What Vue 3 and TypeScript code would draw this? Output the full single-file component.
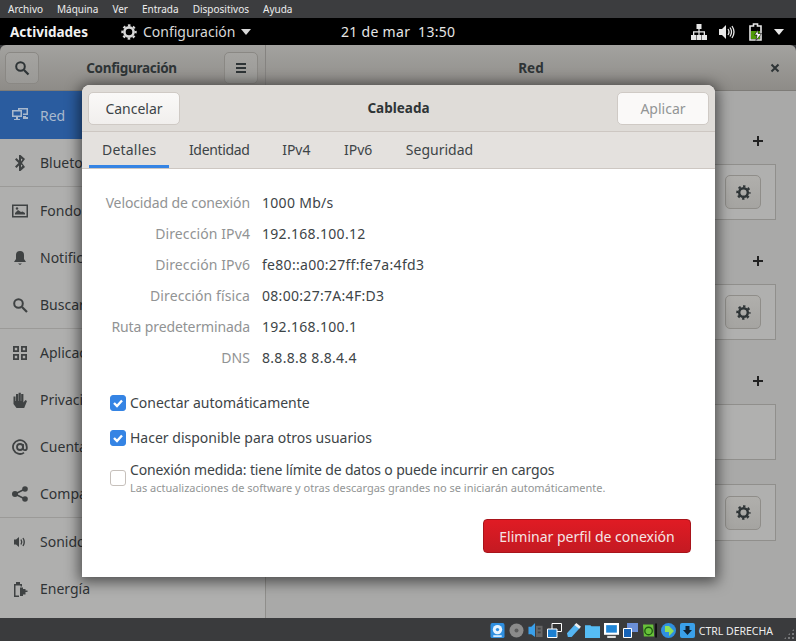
<template>
  <div class="screen">
    <svg class="defs" width="0" height="0">
      <symbol id="gear" viewBox="0 0 16 16">
        <circle cx="8" cy="8" r="4.600" fill="none" stroke="currentColor" stroke-width="2.600" />
        <circle cx="8" cy="8" r="6.700" fill="none" stroke="currentColor" stroke-width="2" stroke-dasharray="2.600 2.662" stroke-dashoffset="1.300" />
      </symbol>
    </svg>

    <div class="menubar">
      <span v-for="m in menus" :key="m">{{ m }}</span>
    </div>

    <div class="topbar">
      <span class="activities">Actividades</span>
      <span class="app-menu">
        <svg class="app-gear" viewBox="0 0 16 16"><use href="#gear" /></svg>
        Configuración
        <i class="caret"></i>
      </span>
      <span class="clock">21 de mar&nbsp;&nbsp;13:50</span>
      <span class="tray">
        <svg width="16" height="16" viewBox="0 0 16 16" fill="#e8e8e8">
          <path d="M5.500 0h5v5H8.600v2.200H14V11h-1.300V8.400H8.600V11H7.400V8.400H3.300V11H2V7.200h5.400V5H5.500z" />
          <path d="M0 11h5v5H0zM5.500 11h5v5h-5zM11 11h5v5h-5z" />
        </svg>
        <svg class="tray-sound" width="16" height="16" viewBox="0 0 16 16" fill="#e8e8e8">
          <path d="M0 5h3l4-4v14l-4-4H0z" />
          <path d="M9 5q2 3 0 6M11 3.500q3 4.500 0 9M13 2q4 6 0 12" fill="none" stroke="#e8e8e8" stroke-width="1.300" />
        </svg>
        <svg width="14" height="18" viewBox="0 0 14 18">
          <path d="M4.500 1h4v2H12v14H1V3h3.500z" fill="none" stroke="#e8e8e8" stroke-width="1.600" />
          <path d="M2 8h9v8H2z" fill="#4e9a06" />
          <path d="M9 7 5.500 12h2.500l-1 5.500 5.500-7H9z" fill="#fff" stroke="#000" stroke-width=".6" />
        </svg>
        <i class="caret tray-caret"></i>
      </span>
    </div>

    <div class="window">
      <div class="titlebar">
        <div class="title-left">
          <button class="head-btn" type="button">
            <svg width="16" height="16" viewBox="0 0 16 16"><circle cx="6.500" cy="6.500" r="4.300" fill="none" stroke="#2e3436" stroke-width="2" /><path d="m10 10 4.500 4.500" stroke="#2e3436" stroke-width="2.200" /></svg>
          </button>
          <span class="title-text">Configuración</span>
          <button class="head-btn" type="button">
            <svg width="16" height="16" viewBox="0 0 16 16" fill="#2e3436"><path d="M3 3h10v2H3zM3 7h10v2H3zM3 11h10v2H3z" /></svg>
          </button>
        </div>
        <div class="title-right">
          <span class="title-text">Red</span>
          <svg class="close" width="10" height="10" viewBox="0 0 10 10"><path d="m1.500 1.500 7 7m0-7-7 7" stroke="#2e3436" stroke-width="2" /></svg>
        </div>
      </div>

      <div class="main">
        <nav class="sidebar">
          <div
            v-for="item in sideItems"
            :key="item.label"
            :class="['side-row', { active: item.active, sep: item.sep }]"
          >
            <svg class="side-icon" width="16" height="16" viewBox="0 0 16 16" v-html="item.icon"></svg>
            <span>{{ item.label }}</span>
          </div>
        </nav>

        <section class="content">
          <div v-for="(p, i) in panels" :key="i" :class="['group', p.cls]">
            <div v-if="p.plus" class="plus-row"><span class="plus"></span></div>
            <div class="panel">
              <button v-if="p.gear" class="gear-btn" type="button">
                <svg width="15" height="15" viewBox="0 0 16 16"><use href="#gear" /></svg>
              </button>
            </div>
          </div>
        </section>
      </div>

      <div class="dialog">
        <header class="dlg-head">
          <button class="dlg-btn" type="button">Cancelar</button>
          <span class="dlg-title">Cableada</span>
          <button class="dlg-btn disabled" type="button">Aplicar</button>
        </header>
        <div class="tabs">
          <span v-for="(t, i) in tabs" :key="t" :class="['tab', { on: i === 0 }]">{{ t }}</span>
        </div>
        <div class="dlg-body">
          <dl class="details">
            <template v-for="d in details" :key="d.k">
              <dt>{{ d.k }}</dt>
              <dd>{{ d.v }}</dd>
            </template>
          </dl>

          <label class="check first">
            <span class="box on"><svg width="16" height="16" viewBox="0 0 16 16"><path d="m4 8 3 3 5-5.500" fill="none" stroke="#fff" stroke-width="2.400" /></svg></span>
            <span>Conectar automáticamente</span>
          </label>
          <label class="check second">
            <span class="box on"><svg width="16" height="16" viewBox="0 0 16 16"><path d="m4 8 3 3 5-5.500" fill="none" stroke="#fff" stroke-width="2.400" /></svg></span>
            <span>Hacer disponible para otros usuarios</span>
          </label>
          <label class="check third">
            <span class="box"></span>
            <span class="check-text">
              <span>Conexión medida: tiene límite de datos o puede incurrir en cargos</span>
              <small>Las actualizaciones de software y otras descargas grandes no se iniciarán automáticamente.</small>
            </span>
          </label>

          <div class="dlg-actions">
            <button class="danger" type="button">Eliminar perfil de conexión</button>
          </div>
        </div>
      </div>
    </div>

    <footer class="statusbar">
      <svg class="st" viewBox="0 0 15 16"><rect width="15" height="16" rx="2" fill="#2f8fe0" /><circle cx="7.500" cy="7" r="5" fill="#e8f4ff" /><circle cx="7.500" cy="7" r="1.800" fill="#2f8fe0" /><path d="M3 13h9v2H3z" fill="#cfe8ff" /></svg>
      <svg class="st" viewBox="0 0 15 15"><circle cx="7.500" cy="7.500" r="7" fill="#8b8b8b" /><circle cx="7.500" cy="7.500" r="2" fill="#5c5c5c" /></svg>
      <svg class="st" viewBox="0 0 15 16"><path d="M0 4h3l4-4v15l-4-3H0z" fill="#3aa0ea" /><path d="M8 3h7v12H8z" fill="#666" /><path d="M10 5h3v2h-3zM10 9h3v2h-3z" fill="#444" /></svg>
      <svg class="st" viewBox="0 0 15 15"><path d="M5 .500h9.500v8H5z" fill="#333" stroke="#fff" /><path d="M.500 6H10v8.500H.500z" fill="#1c7fd0" stroke="#fff" /></svg>
      <svg class="st" viewBox="0 0 16 16"><path d="m10 1 5 4-9 10H2l-1-4z" fill="#55b5f2" /><path d="m11 0 5 4-2 2-5-4z" fill="#eee" /></svg>
      <svg class="st" viewBox="0 0 14 14"><path d="M0 2h5l1 1h8v11H0z" fill="#56bdf5" /></svg>
      <svg class="st" viewBox="0 0 14 14"><rect width="14" height="11" fill="#fff" /><rect x="2" y="2" width="10" height="7" fill="#1f86d8" /><path d="M3 12h8v2H3z" fill="#ddd" /></svg>
      <svg class="st" viewBox="0 0 15 15"><path d="M4 0h11v9H4z" fill="#6b8fd8" /><path d="M.500 5.500h8v9h-8z" fill="#1763b8" stroke="#fff" /></svg>
      <svg class="st" viewBox="0 0 16 15"><path d="M1 1h11l1 13H2z" fill="#68c23a" /><circle cx="7" cy="8" r="4" fill="none" stroke="#1e5c10" stroke-width="1.400" /><path d="M14 0h2v15h-2z" fill="#111" /></svg>
      <svg class="st" viewBox="0 0 15 15"><circle cx="7.500" cy="7.500" r="7.500" fill="#2f8fe0" /><path d="M4 3h4l5 5-5 5V9H4z" fill="#8fe05a" /></svg>
      <svg class="st" viewBox="0 0 15 15"><rect width="15" height="15" rx="2" fill="#3aa0ea" /><path d="M5.500 3h4v4H12l-4.500 5L3 7h2.500z" fill="#123" /></svg>
      <span class="st-text">CTRL DERECHA</span>
    </footer>
  </div>
</template>

<script setup lang="ts">
interface SideItem {
  label: string
  icon: string
  active?: boolean
  sep?: boolean
}

const menus = ['Archivo', 'Máquina', 'Ver', 'Entrada', 'Dispositivos', 'Ayuda']
const tabs = ['Detalles', 'Identidad', 'IPv4', 'IPv6', 'Seguridad']

const sideItems: SideItem[] = [
  { label: 'Red', active: true, icon: '<path d="M0 3h10v7H6v2h2v1H2v-1h2v-2H0zM1.500 4.500v4h7v-4z" fill="currentColor" fill-rule="evenodd"/><path d="M6 1h10v7h-5V6.500h3.500v-4H7.500V3H6z" fill="currentColor"/><path d="M11 9h3v1h2v2h-5z" fill="currentColor"/>' },
  { label: 'Bluetooth', sep: true, icon: '<path d="M7 0h1.500L13 4l-3 4 3 4-4.500 4H7v-5.500L4.500 13 3 11.500 6.500 8 3 4.500 4.500 3 7 5.500zM9 3.500v3L10.500 4.500zM9 9.500v3l1.500-2z" fill="currentColor" fill-rule="evenodd"/>' },
  { label: 'Fondo', icon: '<path d="M0 1.500h16v13H0zM1.500 3v10h13V3z" fill="currentColor" fill-rule="evenodd"/><path d="M3 10 6 7l3 2 1.500-.5L13 10v1.500H3z" fill="currentColor"/><circle cx="5" cy="5.500" r="1.200" fill="currentColor"/>' },
  { label: 'Notificaciones', icon: '<path d="M8 1a4 4 0 0 1 4 4v4l2 3H2l2-3V5a4 4 0 0 1 4-4zM6 13.500h4L8 15z" fill="currentColor"/>' },
  { label: 'Buscar', sep: true, icon: '<circle cx="6.500" cy="6.500" r="4.300" fill="none" stroke="currentColor" stroke-width="2"/><path d="m10 10 5 5" stroke="currentColor" stroke-width="2.200"/>' },
  { label: 'Aplicaciones', icon: '<path d="M1 1h6v6H1zM9 1h6v6H9zM1 9h6v6H1zM9 9h6v6H9zM2.800 2.800v2.400h2.400V2.800zM10.800 2.800v2.400h2.400V2.800zM2.800 10.800v2.400h2.400v-2.400zM10.800 10.800v2.400h2.400v-2.400z" fill="currentColor" fill-rule="evenodd"/>' },
  { label: 'Privacidad', icon: '<path d="M1.500 4.500h2V9H4V2h2.200v7h.4V.800h2.200V9h.4V2h2.200v8.500l2-2.500 1.600 1-2.800 7H4.500L1.500 12z" fill="currentColor"/>' },
  { label: 'Cuentas', icon: '<circle cx="8" cy="8" r="3" fill="none" stroke="currentColor" stroke-width="1.800"/><path d="M11 5v4.200a1.900 1.900 0 0 0 3.800 0V8A6.900 6.900 0 1 0 12 13.600" fill="none" stroke="currentColor" stroke-width="1.800"/>' },
  { label: 'Compartir', sep: true, icon: '<circle cx="3" cy="8" r="3" fill="currentColor"/><circle cx="13" cy="3" r="2.800" fill="currentColor"/><circle cx="13" cy="13" r="2.800" fill="currentColor"/><path d="m3 8 10-5M3 8l10 5" stroke="currentColor" stroke-width="1.600"/>' },
  { label: 'Sonido', icon: '<path d="M2 5.500h2L7 3v10l-3-2.500H2z" fill="currentColor"/><path d="M9 5.500q1.500 2.500 0 5M11 4q2.500 4 0 8" fill="none" stroke="currentColor" stroke-width="1.400"/>' },
  { label: 'Energía', icon: '<path d="M2 3h2V1h4v2h2v2.500H8.500v-1h-5v10H7V16H2z" fill="currentColor"/><path d="M8 6.500h3V8h2.500v1.500H15.500V11h-2v2.500H11V15H8z" fill="currentColor"/>' },
]

const panels = [
  { plus: true, gear: true, cls: 'g1' },
  { plus: true, gear: true, cls: 'g2' },
  { plus: true, gear: false, cls: 'g3' },
  { plus: false, gear: true, cls: 'g4' },
]

const details = [
  { k: 'Velocidad de conexión', v: '1000 Mb/s' },
  { k: 'Dirección IPv4', v: '192.168.100.12' },
  { k: 'Dirección IPv6', v: 'fe80::a00:27ff:fe7a:4fd3' },
  { k: 'Dirección física', v: '08:00:27:7A:4F:D3' },
  { k: 'Ruta predeterminada', v: '192.168.100.1' },
  { k: 'DNS', v: '8.8.8.8 8.8.4.4' },
]
</script>

<style>
html,
body {
  margin: 0;
  background: #3a3b3d;
}
</style>

<style scoped>
.defs {
  position: absolute;
}

.screen {
  width: 796px;
  height: 641px;
  display: flex;
  flex-direction: column;
  overflow: hidden;
  font-family: "Noto Sans", "Open Sans", sans-serif;
  font-size: 14px;
  color: #2e3436;
}

.menubar {
  height: 18px;
  flex: none;
  background: #3c3d3f;
  color: #eee;
  display: flex;
  align-items: center;
  gap: 14px;
  padding-left: 8px;
  font-size: 10px;
}

.topbar {
  height: 27px;
  flex: none;
  background: #000;
  color: #e6e6e6;
  display: flex;
  align-items: center;
  position: relative;
  padding-left: 10px;
  font-size: 14px;
}
.activities {
  font-weight: 700;
  color: #f2f2f2;
  font-size: 13.500px;
}
.app-menu {
  margin-left: 33px;
  display: flex;
  align-items: center;
  gap: 6px;
  color: #d8d8d8;
}
.app-gear {
  width: 16px;
  height: 16px;
}
.caret {
  width: 0;
  height: 0;
  border: 5.500px solid transparent;
  border-top: 6px solid #d8d8d8;
  border-bottom: 0;
}
.clock {
  position: absolute;
  left: 341px;
  letter-spacing: 0.3px;
}
.tray {
  margin-left: auto;
  display: flex;
  align-items: center;
  gap: 12px;
  padding-right: 12px;
}
.tray-sound {
  margin-right: 2px;
}
.tray-caret {
  border-top-color: #e8e8e8;
  margin-left: -1px;
}

.window {
  flex: 1;
  min-height: 0;
  position: relative;
  display: flex;
  flex-direction: column;
}

.titlebar {
  height: 46px;
  flex: none;
  display: flex;
  background: linear-gradient(#a3a29f, #8e8c88);
  border-radius: 6px 6px 0 0;
  border-bottom: 1px solid #7e7c78;
  box-sizing: border-box;
}
.title-left {
  width: 266px;
  box-sizing: border-box;
  display: flex;
  align-items: center;
  justify-content: space-between;
  padding: 0 7px 0 5px;
  border-right: 1px solid #858380;
}
.title-left .title-text {
  letter-spacing: -0.3px;
}
.title-right {
  flex: 1;
  position: relative;
  display: flex;
  align-items: center;
  justify-content: center;
}
.title-text {
  font-weight: 700;
  font-size: 13.500px;
}
.head-btn {
  width: 34px;
  height: 32px;
  padding: 0;
  display: flex;
  align-items: center;
  justify-content: center;
  background: linear-gradient(#a5a4a1, #9a9996);
  border: 1px solid #8a8884;
  border-radius: 5px;
}
.close {
  position: absolute;
  right: 16px;
  top: 18px;
}

.main {
  flex: 1;
  min-height: 0;
  display: flex;
}

.sidebar {
  width: 266px;
  box-sizing: border-box;
  flex: none;
  background: #afafae;
  border-right: 1px solid #8f8e8b;
}
.side-row {
  height: 47px;
  box-sizing: content-box;
  display: flex;
  align-items: center;
  gap: 12px;
  padding-left: 12px;
  color: #2f3335;
}
.side-row.sep {
  border-bottom: 1px solid #9b9a98;
}
.side-row.active {
  height: 48px;
  background: #2a5c9f;
  color: #a9b9cd;
}
.side-icon {
  flex: none;
  color: #3f4243;
}
.active .side-icon {
  color: #a9b9cd;
}

.content {
  flex: 1;
  background: #a9a9a8;
  display: flex;
  flex-direction: column;
  align-items: flex-end;
  padding-right: 20px;
}
.group {
  width: 100%;
  display: flex;
  flex-direction: column;
}
.plus-row {
  height: 24px;
  margin-bottom: 11px;
  display: flex;
  justify-content: flex-end;
  align-items: center;
  padding-right: 13px;
}
.plus {
  width: 10px;
  height: 10px;
  background:
    linear-gradient(#222, #222) center / 10px 2px no-repeat,
    linear-gradient(#222, #222) center / 2px 10px no-repeat;
}
.panel {
  height: 56px;
  box-sizing: border-box;
  background: #b0b0af;
  border: 1px solid #908f8c;
  display: flex;
  justify-content: flex-end;
  align-items: center;
  padding-right: 14px;
}
.g1 {
  margin-top: 38px;
}
.g2,
.g3 {
  margin-top: 29px;
}
.g4 {
  margin-top: 24px;
}
.g4 .panel {
  height: 57px;
}
.gear-btn {
  width: 36px;
  height: 34px;
  padding: 0;
  color: #2e3436;
  display: flex;
  align-items: center;
  justify-content: center;
  background: linear-gradient(#b0afac, #a5a4a1);
  border: 1px solid #8f8d89;
  border-radius: 5px;
}

.dialog {
  position: absolute;
  left: 82px;
  top: 40px;
  width: 633px;
  height: 492px;
  display: flex;
  flex-direction: column;
  background: #fff;
  border-radius: 8px 8px 0 0;
  box-shadow: 0 2px 14px 3px rgba(0, 0, 0, 0.55);
}
.dlg-head {
  height: 47px;
  flex: none;
  box-sizing: border-box;
  display: flex;
  align-items: center;
  justify-content: space-between;
  padding: 0 6px;
  background: #dfdcd8;
  border-radius: 8px 8px 0 0;
  border-bottom: 1px solid #cdc7c2;
}
.dlg-title {
  font-weight: 700;
  font-size: 13.500px;
}
.dlg-btn {
  width: 92px;
  height: 33px;
  font: inherit;
  color: #3d4447;
  background: linear-gradient(#faf9f8, #f1efed);
  border: 1px solid #cfcac5;
  border-radius: 5px;
}
.dlg-btn.disabled {
  color: #929595;
  background: #faf9f8;
}
.tabs {
  height: 37px;
  flex: none;
  box-sizing: border-box;
  display: flex;
  background: #e4e1de;
  border-bottom: 1px solid #cdc7c2;
  padding-left: 7px;
}
.tab {
  padding: 0 13px 2px;
  margin-right: 6.500px;
  display: flex;
  align-items: center;
  color: #3d4447;
  box-sizing: border-box;
}
.tab.on {
  border-bottom: 3px solid #3584e4;
  padding: 1px 13px 0;
  height: 36px;
  letter-spacing: 0.2px;
}
.tab:nth-child(2) {
  letter-spacing: -0.33px;
}
.tab:nth-child(n + 3) {
  margin-right: 7.500px;
}
.dlg-body {
  flex: 1;
  display: flex;
  flex-direction: column;
  min-height: 0;
}
.details {
  margin: 18px 0 0;
  display: grid;
  grid-template-columns: 168px 1fr;
  column-gap: 12px;
  grid-auto-rows: 31.050px;
  align-items: center;
}
.details dt {
  text-align: right;
  color: #919394;
  letter-spacing: 0.1px;
}
.details dt:nth-of-type(1),
.details dt:nth-of-type(5) {
  letter-spacing: -0.12px;
}
.details dd {
  margin: 0;
  color: #3d4447;
  letter-spacing: 0.3px;
}
.check {
  display: flex;
  align-items: center;
  gap: 4px;
  margin-left: 28px;
  color: #3d4447;
}
.check.first {
  margin-top: 20.200px;
}
.check.second {
  margin-top: 16px;
}
.check.third {
  margin-top: 14px;
}
.box {
  width: 16px;
  height: 16px;
  flex: none;
  box-sizing: border-box;
  border: 1px solid #c6c0bb;
  border-radius: 3px;
  background: #fff;
}
.third .box {
  margin-bottom: 2px;
}
.box.on {
  background: #3584e4;
  border-color: #3584e4;
}
.box.on svg {
  display: block;
  margin: -1px;
}
.check-text {
  display: flex;
  flex-direction: column;
}
.check-text span {
  line-height: 18px;
  letter-spacing: -0.15px;
}
.check-text small {
  font-size: 11px;
  color: #929595;
  line-height: 18px;
}
.dlg-actions {
  display: flex;
  justify-content: flex-end;
  margin-top: 22px;
  padding-right: 24px;
}
.danger {
  width: 208px;
  height: 34px;
  font: inherit;
  color: #f5e5e5;
  background: linear-gradient(#e01b24, #c41a22);
  border: 1px solid #a8141b;
  border-radius: 4px;
}

.statusbar {
  height: 23px;
  flex: none;
  background: #3a3b3d;
  display: flex;
  align-items: center;
  justify-content: flex-end;
  padding-right: 23px;
  gap: 4px;
  position: relative;
}
.statusbar::after {
  content: "";
  position: absolute;
  right: 1px;
  bottom: 1px;
  width: 12px;
  height: 12px;
  background: radial-gradient(circle, #77787a 1px, transparent 1.200px) 0 0 / 4px 4px;
  clip-path: polygon(100% 0, 100% 100%, 0 100%);
}
.st {
  flex: none;
  width: 15px;
  height: 15px;
  margin-top: 2px;
}
.st-text {
  font-size: 10.500px;
  color: #eee;
  margin-top: 2px;
}
</style>
